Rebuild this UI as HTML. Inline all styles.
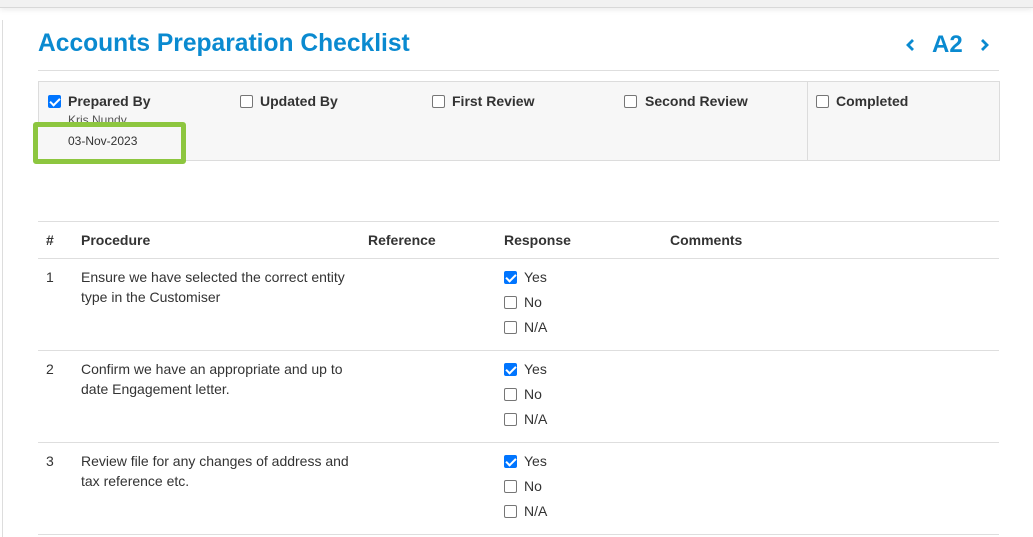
<!DOCTYPE html>
<html><head><style>
*{box-sizing:border-box;margin:0;padding:0}
body{width:1033px;height:537px;overflow:hidden;background:#fff;font-family:"Liberation Sans",Arial,sans-serif;color:#333;position:relative;font-size:14px}
.abs{position:absolute}
.cb{position:absolute;width:13px;height:13px;border:1px solid #767676;border-radius:2px;background:#fff}
.cb.on{background:#0075ff;border-color:#0075ff}
.cb.on::after{content:"";position:absolute;left:3px;top:0px;width:4px;height:8px;border:solid #fff;border-width:0 2px 2px 0;transform:rotate(45deg)}
.lbl{position:absolute;font-weight:bold;font-size:14px;color:#333}
.t{position:absolute;font-size:14px;color:#333;line-height:20px}
.hl{position:absolute;left:38px;width:961px;height:1px;background:#dedede}
</style></head><body>
<div class="abs" style="left:0;top:0;width:1033px;height:8px;background:#f1f1f1;border-bottom:1px solid #d8d8d8;box-shadow:0 2px 6px rgba(0,0,0,.08)"></div>
<div class="abs" style="left:2px;top:20px;width:1px;height:517px;background:#ddd"></div>
<div class="abs" style="left:38px;top:30px;font-size:24.6px;font-weight:bold;color:#0a8ad0">Accounts Preparation Checklist</div>
<svg class="abs" style="left:905px;top:38px" width="12" height="14" viewBox="0 0 12 14"><path d="M8 2 L3 7 L8 12" fill="none" stroke="#0a8ad0" stroke-width="2.8"/></svg>
<div class="abs" style="left:932px;top:31px;font-size:24px;font-weight:bold;color:#0a8ad0">A2</div>
<svg class="abs" style="left:978px;top:38px" width="12" height="14" viewBox="0 0 12 14"><path d="M4 2 L9 7 L4 12" fill="none" stroke="#0a8ad0" stroke-width="2.8"/></svg>
<div class="hl" style="top:70px"></div>
<div class="abs" style="left:38px;top:81px;width:962px;height:80px;background:#f7f7f7;border:1px solid #dcdcdc"></div>
<div class="abs" style="left:807px;top:81px;width:1px;height:80px;background:#dcdcdc"></div>
<div class="cb on" style="left:48px;top:95px"></div><div class="lbl" style="left:68px;top:93px">Prepared By</div>
<div class="cb" style="left:240px;top:95px"></div><div class="lbl" style="left:260px;top:93px">Updated By</div>
<div class="cb" style="left:432px;top:95px"></div><div class="lbl" style="left:452px;top:93px">First Review</div>
<div class="cb" style="left:624px;top:95px"></div><div class="lbl" style="left:645px;top:93px">Second Review</div>
<div class="cb" style="left:816px;top:95px"></div><div class="lbl" style="left:836px;top:93px">Completed</div>
<div class="abs" style="left:68px;top:113px;font-size:12px;color:#555">Kris Nundy</div>
<div class="abs" style="left:33px;top:122px;width:153px;height:42px;border:5px solid #8dc63f;border-radius:3px;background:#f7f7f7"></div>
<div class="abs" style="left:68px;top:134px;font-size:12px;color:#333">03-Nov-2023</div>
<div class="hl" style="top:221px"></div>
<div class="lbl" style="left:46px;top:232px">#</div>
<div class="lbl" style="left:81px;top:232px">Procedure</div>
<div class="lbl" style="left:368px;top:232px">Reference</div>
<div class="lbl" style="left:504px;top:232px">Response</div>
<div class="lbl" style="left:670px;top:232px">Comments</div>
<div class="hl" style="top:258px"></div>

<div class="t" style="left:46px;top:267px">1</div>
<div class="t" style="left:81px;top:267px">Ensure we have selected the correct entity<br>type in the Customiser</div>
<div class="cb on" style="left:504px;top:271px"></div><div class="t" style="left:524px;top:267px">Yes</div>
<div class="cb" style="left:504px;top:296px"></div><div class="t" style="left:524px;top:292px">No</div>
<div class="cb" style="left:504px;top:321px"></div><div class="t" style="left:524px;top:317px">N/A</div>
<div class="hl" style="top:350px"></div>

<div class="t" style="left:46px;top:359px">2</div>
<div class="t" style="left:81px;top:359px">Confirm we have an appropriate and up to<br>date Engagement letter.</div>
<div class="cb on" style="left:504px;top:363px"></div><div class="t" style="left:524px;top:359px">Yes</div>
<div class="cb" style="left:504px;top:388px"></div><div class="t" style="left:524px;top:384px">No</div>
<div class="cb" style="left:504px;top:413px"></div><div class="t" style="left:524px;top:409px">N/A</div>
<div class="hl" style="top:442px"></div>

<div class="t" style="left:46px;top:451px">3</div>
<div class="t" style="left:81px;top:451px">Review file for any changes of address and<br>tax reference etc.</div>
<div class="cb on" style="left:504px;top:455px"></div><div class="t" style="left:524px;top:451px">Yes</div>
<div class="cb" style="left:504px;top:480px"></div><div class="t" style="left:524px;top:476px">No</div>
<div class="cb" style="left:504px;top:505px"></div><div class="t" style="left:524px;top:501px">N/A</div>
<div class="hl" style="top:534px"></div>
</body></html>
